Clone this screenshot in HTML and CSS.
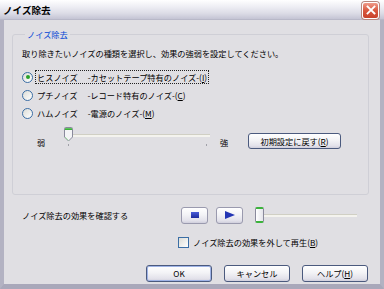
FILE: index.html
```html
<!DOCTYPE html>
<html lang="ja">
<head>
    <meta charset="UTF-8">
    <meta name="viewport" content="width=device-width, initial-scale=1.0">
    <title>ノイズ除去</title>
    <link rel="stylesheet" href="styles.css">
</head>
<body>
    <div class="window">
        <div class="titlebar">
            <span class="title">ノイズ除去</span>
            <span class="close">
                <svg width="10" height="10" viewBox="0 0 10 10">
                    <path d="M1.5 1.5 L8.5 8.5 M8.5 1.5 L1.5 8.5" stroke="#fff" stroke-width="1.8" stroke-linecap="square"/>
                </svg>
            </span>
        </div>
        <div class="client">
            <fieldset class="group">
                <legend>ノイズ除去</legend>
                <p class="intro">取り除きたいノイズの種類を選択し、効果の強弱を設定してください。</p>
                <div class="radios">
                    <label class="radio"><span class="dot checked"></span><span class="focus">ヒスノイズ　 -カセットテープ特有のノイズ-(<u>I</u>)</span></label>
                    <label class="radio"><span class="dot"></span><span class="text">プチノイズ　 -レコード特有のノイズ-(<u>C</u>)</span></label>
                    <label class="radio"><span class="dot"></span><span class="text">ハムノイズ　 -電源のノイズ-(<u>M</u>)</span></label>
                </div>
                <div class="strength">
                    <span class="end-label">弱</span>
                    <div class="slider">
                        <div class="track"></div>
                        <span class="tick tick-min"></span>
                        <span class="tick tick-max"></span>
                        <svg class="pointer" width="9" height="15" viewBox="0 0 9 15">
                            <path d="M0.5 1.5 Q0.5 0.5 1.5 0.5 H7.5 Q8.5 0.5 8.5 1.5 V10 L4.5 14 L0.5 10 Z" fill="#f4f4f6" stroke="#8a8a9c"/>
                            <path d="M1 1.2 H8 V3 H1 Z" fill="#3bb33b"/>
                            <path d="M1 10 L4.5 13.4" stroke="#9ed79e" stroke-width="1"/>
                        </svg>
                    </div>
                    <span class="end-label strong">強</span>
                    <button class="btn reset">初期設定に戻す(<u>R</u>)</button>
                </div>
            </fieldset>

            <div class="preview">
                <span class="preview-label">ノイズ除去の効果を確認する</span>
                <button class="btn media"><span class="stop-icon"></span></button>
                <button class="btn media"><span class="play-icon"></span></button>
                <div class="seek">
                    <span class="seek-thumb"></span>
                    <div class="seek-track"></div>
                </div>
            </div>

            <label class="check"><span class="box"></span>ノイズ除去の効果を外して再生(<u>B</u>)</label>

            <div class="actions">
                <button class="btn action default">OK</button>
                <button class="btn action">キャンセル</button>
                <button class="btn action">ヘルプ(<u>H</u>)</button>
            </div>
        </div>
    </div>
</body>
</html>
```

FILE: styles.css
```css
body {
    margin: 0;
    padding: 0;
    font-family: "Noto Sans CJK JP", "DejaVu Sans", sans-serif;
    font-size: 8.2px;
    color: #000;
    background: #e0dfe3;
}
.window {
    width: 384px;
    height: 289px;
    box-sizing: border-box;
    display: flex;
    flex-direction: column;
    background: #e0dfe3;
    border-left: 4px solid #b3b2c2;
    border-right: 4px solid #b3b2c2;
    border-bottom: 5px solid #a9a8ba;
}
.titlebar {
    height: 20px;
    margin: 0 -4px;
    display: flex;
    align-items: center;
    justify-content: space-between;
    padding: 0 5px 0 3px;
    background: linear-gradient(#ffffff, #eeeef4 35%, #dcdce6 70%, #c4c4d4);
    border-bottom: 1px solid #b8b8c8;
    box-sizing: border-box;
}
.title {
    font-weight: bold;
    font-size: 9.6px;
    color: #000;
}
.close {
    width: 15px;
    height: 15px;
    margin-top: 1px;
    display: flex;
    align-items: center;
    justify-content: center;
    border: 1px solid #fff;
    border-radius: 3px;
    background: linear-gradient(#ef9b8a, #d9583f 50%, #c8412a);
    box-shadow: 0 0 0 1px #b9867d;
}
.client {
    flex: 1;
    padding: 9px 11px 0 8px;
    display: flex;
    flex-direction: column;
}
.group {
    margin: 0;
    padding: 0 0 45px 9px;
    border: 1px solid #cfcfd6;
    border-radius: 3px;
    min-width: 0;
}
.group legend {
    padding: 0 2px;
    margin-left: 3px;
    color: #0046d5;
    line-height: 10px;
}
.intro {
    margin: 8px 0 0;
    line-height: 12px;
}
.radios {
    margin-top: 12px;
    display: flex;
    flex-direction: column;
    gap: 6px;
}
.radio {
    display: flex;
    align-items: center;
    height: 12px;
}
.dot {
    width: 9px;
    height: 9px;
    border: 1px solid #3b6ea5;
    border-radius: 50%;
    background: linear-gradient(135deg, #dcdcd6, #ffffff);
    margin-right: 2px;
    display: flex;
    align-items: center;
    justify-content: center;
}
.dot.checked::after {
    content: "";
    width: 4px;
    height: 4px;
    border-radius: 50%;
    background: #2aa22a;
}
.focus,
.text {
    padding: 0 1px;
    line-height: 12px;
    border: 1px dotted transparent;
}
.focus {
    border-color: #222;
}
.strength {
    display: flex;
    align-items: flex-start;
    margin-top: 8px;
    padding-left: 15px;
}
.end-label {
    width: 9px;
    margin-top: 9px;
    line-height: 12px;
}
.slider {
    position: relative;
    width: 150px;
    height: 20px;
    margin-left: 17px;
}
.track {
    margin: 7px 0 0 2px;
    width: 145px;
    height: 2px;
    background: #f4f3ee;
    border-top: 1px solid #d0cfc4;
}
.tick {
    position: absolute;
    top: 17px;
    width: 1px;
    height: 2px;
    background: #a0a0a8;
}
.tick-min {
    left: 5px;
}
.tick-max {
    left: 143px;
}
.pointer {
    position: absolute;
    left: 1px;
    top: 0;
}
.strong {
    margin-left: 7px;
}
.btn {
    font-family: inherit;
    font-size: 8.2px;
    color: #000;
    padding: 0;
    border: 1px solid #4b5a7e;
    border-radius: 3px;
    background: linear-gradient(#ffffff, #f3f3f6 45%, #e2e1ea 85%, #cfcedc);
    box-sizing: border-box;
}
.reset {
    margin: 6px 0 0 19px;
    width: 93px;
    height: 16px;
    line-height: 12px;
}
.preview {
    display: flex;
    align-items: center;
    margin-top: 12px;
    height: 16px;
    padding-left: 10px;
}
.preview-label {
    width: 159px;
}
.media {
    width: 27px;
    height: 17px;
    display: flex;
    align-items: center;
    justify-content: center;
    border-color: #9a9aae;
    margin-right: 8px;
}
.stop-icon {
    width: 8px;
    height: 6px;
    background: linear-gradient(#4a5ed8, #1d2b9c);
}
.play-icon {
    width: 0;
    height: 0;
    border-top: 4px solid transparent;
    border-bottom: 4px solid transparent;
    border-left: 10px solid #2436b4;
}
.seek {
    display: flex;
    align-items: center;
    margin-left: 4px;
}
.seek-thumb {
    width: 7px;
    height: 12px;
    border: 1px solid #8a8a9c;
    border-top: 2px solid #3bb33b;
    border-bottom: 2px solid #3bb33b;
    border-radius: 2px;
    background: linear-gradient(90deg, #ffffff, #e4e4ea);
}
.seek-track {
    width: 93px;
    height: 2px;
    background: #f4f3ee;
    border-top: 1px solid #d0cfc4;
}
.check {
    display: flex;
    align-items: center;
    margin: 13px 0 0 166px;
    height: 12px;
    line-height: 12px;
}
.box {
    width: 9px;
    height: 9px;
    border: 1px solid #3b6ea5;
    background: linear-gradient(135deg, #dcdcd6, #ffffff);
    margin-right: 4px;
}
.actions {
    display: flex;
    justify-content: flex-end;
    gap: 12px;
    margin-top: 17px;
    padding-right: 1px;
}
.action {
    width: 66px;
    height: 17px;
    line-height: 13px;
}
.action.default {
    box-shadow: inset 0 0 0 1px #9fb3e6;
}
```
